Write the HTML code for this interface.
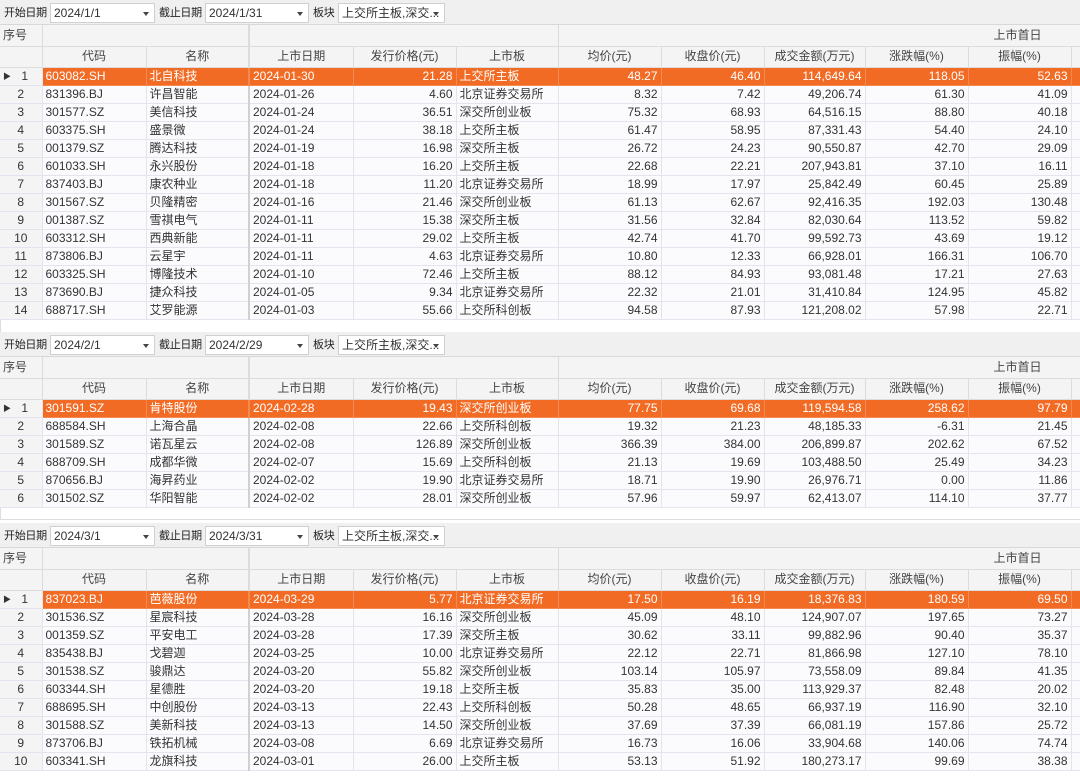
<!DOCTYPE html>
<html><head><meta charset="utf-8"><style>
*{margin:0;padding:0;box-sizing:border-box}
body{width:1080px;height:779px;background:#fff;position:relative;overflow:hidden;font-family:"Liberation Sans","Noto Sans CJK SC",sans-serif;font-size:12px;color:#333}
.sec{position:absolute;left:0;width:1080px}
.tb{height:25px;background:#f0f0f0;position:relative;border-bottom:1px solid #d8d8d8}
.tb span{position:absolute;top:3px;height:20px;line-height:20px;font-size:11px;color:#222;letter-spacing:-0.3px}
.cb{position:absolute;top:3px;height:20px;line-height:18px;background:#fff;border:1px solid #d0d0d0;padding:0 3px;font-size:12px}
.cb:after{content:"";position:absolute;right:5px;top:8px;border-left:3px solid transparent;border-right:3px solid transparent;border-top:4px solid #444}
table{border-collapse:collapse;table-layout:fixed;width:1080px}
td{height:18px;border-right:1px solid #e2e5ee;border-bottom:1px solid #e2e5ee;padding:0 3px;white-space:nowrap;overflow:hidden;background:#fbfbfe;line-height:17px}
tr.h td{height:21px;background:#f4f4f4;border-color:#dcdcdc;text-align:center;color:#444}
td.r{text-align:right}
td.c{text-align:center;background:#f4f4f4}
td.sep{border-right:2px solid #d0d0d0}
tr.s td{background:#f26b25;color:#fff;border-color:#f58a50}
tr.s td.c{background:#f4f4f4;color:#333;border-color:#e2e5ee}
.fill{background:#fff;border-bottom:1px solid #ddd;border-left:1px solid #ddd}
</style></head><body>

<div class="sec" style="top:0">
<div class="tb"><span style="left:4px">开始日期</span><div class="cb" style="left:50px;width:105px">2024/1/1</div><span style="left:159px">截止日期</span><div class="cb" style="left:205px;width:104px">2024/1/31</div><span style="left:313px">板块</span><div class="cb" style="left:338px;width:107px">上交所主板,深交...</div></div>
<table>
<colgroup><col style="width:42px"><col style="width:104px"><col style="width:103px"><col style="width:104px"><col style="width:103px"><col style="width:102px"><col style="width:103px"><col style="width:103px"><col style="width:101px"><col style="width:103px"><col style="width:103px"><col style="width:9px"></colgroup>
<tr class="h"><td style="text-align:left">序号</td><td colspan="2" class="sep"></td><td colspan="3"></td><td colspan="6" style="text-align:right;padding-right:38px">上市首日</td></tr>
<tr class="h"><td></td><td>代码</td><td class="sep">名称</td><td>上市日期</td><td>发行价格(元)</td><td>上市板</td><td>均价(元)</td><td>收盘价(元)</td><td>成交金额(万元)</td><td>涨跌幅(%)</td><td>振幅(%)</td><td></td></tr>
<tr class="s"><td class="c"><span style="font-size:8px;float:left">▶</span>1</td><td>603082.SH</td><td class="sep">北自科技</td><td>2024-01-30</td><td class="r">21.28</td><td>上交所主板</td><td class="r">48.27</td><td class="r">46.40</td><td class="r">114,649.64</td><td class="r">118.05</td><td class="r">52.63</td><td></td></tr>
<tr><td class="c">2</td><td>831396.BJ</td><td class="sep">许昌智能</td><td>2024-01-26</td><td class="r">4.60</td><td>北京证券交易所</td><td class="r">8.32</td><td class="r">7.42</td><td class="r">49,206.74</td><td class="r">61.30</td><td class="r">41.09</td><td></td></tr>
<tr><td class="c">3</td><td>301577.SZ</td><td class="sep">美信科技</td><td>2024-01-24</td><td class="r">36.51</td><td>深交所创业板</td><td class="r">75.32</td><td class="r">68.93</td><td class="r">64,516.15</td><td class="r">88.80</td><td class="r">40.18</td><td></td></tr>
<tr><td class="c">4</td><td>603375.SH</td><td class="sep">盛景微</td><td>2024-01-24</td><td class="r">38.18</td><td>上交所主板</td><td class="r">61.47</td><td class="r">58.95</td><td class="r">87,331.43</td><td class="r">54.40</td><td class="r">24.10</td><td></td></tr>
<tr><td class="c">5</td><td>001379.SZ</td><td class="sep">腾达科技</td><td>2024-01-19</td><td class="r">16.98</td><td>深交所主板</td><td class="r">26.72</td><td class="r">24.23</td><td class="r">90,550.87</td><td class="r">42.70</td><td class="r">29.09</td><td></td></tr>
<tr><td class="c">6</td><td>601033.SH</td><td class="sep">永兴股份</td><td>2024-01-18</td><td class="r">16.20</td><td>上交所主板</td><td class="r">22.68</td><td class="r">22.21</td><td class="r">207,943.81</td><td class="r">37.10</td><td class="r">16.11</td><td></td></tr>
<tr><td class="c">7</td><td>837403.BJ</td><td class="sep">康农种业</td><td>2024-01-18</td><td class="r">11.20</td><td>北京证券交易所</td><td class="r">18.99</td><td class="r">17.97</td><td class="r">25,842.49</td><td class="r">60.45</td><td class="r">25.89</td><td></td></tr>
<tr><td class="c">8</td><td>301567.SZ</td><td class="sep">贝隆精密</td><td>2024-01-16</td><td class="r">21.46</td><td>深交所创业板</td><td class="r">61.13</td><td class="r">62.67</td><td class="r">92,416.35</td><td class="r">192.03</td><td class="r">130.48</td><td></td></tr>
<tr><td class="c">9</td><td>001387.SZ</td><td class="sep">雪祺电气</td><td>2024-01-11</td><td class="r">15.38</td><td>深交所主板</td><td class="r">31.56</td><td class="r">32.84</td><td class="r">82,030.64</td><td class="r">113.52</td><td class="r">59.82</td><td></td></tr>
<tr><td class="c">10</td><td>603312.SH</td><td class="sep">西典新能</td><td>2024-01-11</td><td class="r">29.02</td><td>上交所主板</td><td class="r">42.74</td><td class="r">41.70</td><td class="r">99,592.73</td><td class="r">43.69</td><td class="r">19.12</td><td></td></tr>
<tr><td class="c">11</td><td>873806.BJ</td><td class="sep">云星宇</td><td>2024-01-11</td><td class="r">4.63</td><td>北京证券交易所</td><td class="r">10.80</td><td class="r">12.33</td><td class="r">66,928.01</td><td class="r">166.31</td><td class="r">106.70</td><td></td></tr>
<tr><td class="c">12</td><td>603325.SH</td><td class="sep">博隆技术</td><td>2024-01-10</td><td class="r">72.46</td><td>上交所主板</td><td class="r">88.12</td><td class="r">84.93</td><td class="r">93,081.48</td><td class="r">17.21</td><td class="r">27.63</td><td></td></tr>
<tr><td class="c">13</td><td>873690.BJ</td><td class="sep">捷众科技</td><td>2024-01-05</td><td class="r">9.34</td><td>北京证券交易所</td><td class="r">22.32</td><td class="r">21.01</td><td class="r">31,410.84</td><td class="r">124.95</td><td class="r">45.82</td><td></td></tr>
<tr><td class="c">14</td><td>688717.SH</td><td class="sep">艾罗能源</td><td>2024-01-03</td><td class="r">55.66</td><td>上交所科创板</td><td class="r">94.58</td><td class="r">87.93</td><td class="r">121,208.02</td><td class="r">57.98</td><td class="r">22.71</td><td></td></tr>
</table>
<div class="fill" style="height:13px"></div>
</div>

<div class="sec" style="top:332px">
<div class="tb"><span style="left:4px">开始日期</span><div class="cb" style="left:50px;width:105px">2024/2/1</div><span style="left:159px">截止日期</span><div class="cb" style="left:205px;width:104px">2024/2/29</div><span style="left:313px">板块</span><div class="cb" style="left:338px;width:107px">上交所主板,深交...</div></div>
<table>
<colgroup><col style="width:42px"><col style="width:104px"><col style="width:103px"><col style="width:104px"><col style="width:103px"><col style="width:102px"><col style="width:103px"><col style="width:103px"><col style="width:101px"><col style="width:103px"><col style="width:103px"><col style="width:9px"></colgroup>
<tr class="h"><td style="text-align:left">序号</td><td colspan="2" class="sep"></td><td colspan="3"></td><td colspan="6" style="text-align:right;padding-right:38px">上市首日</td></tr>
<tr class="h"><td></td><td>代码</td><td class="sep">名称</td><td>上市日期</td><td>发行价格(元)</td><td>上市板</td><td>均价(元)</td><td>收盘价(元)</td><td>成交金额(万元)</td><td>涨跌幅(%)</td><td>振幅(%)</td><td></td></tr>
<tr class="s"><td class="c"><span style="font-size:8px;float:left">▶</span>1</td><td>301591.SZ</td><td class="sep">肯特股份</td><td>2024-02-28</td><td class="r">19.43</td><td>深交所创业板</td><td class="r">77.75</td><td class="r">69.68</td><td class="r">119,594.58</td><td class="r">258.62</td><td class="r">97.79</td><td></td></tr>
<tr><td class="c">2</td><td>688584.SH</td><td class="sep">上海合晶</td><td>2024-02-08</td><td class="r">22.66</td><td>上交所科创板</td><td class="r">19.32</td><td class="r">21.23</td><td class="r">48,185.33</td><td class="r">-6.31</td><td class="r">21.45</td><td></td></tr>
<tr><td class="c">3</td><td>301589.SZ</td><td class="sep">诺瓦星云</td><td>2024-02-08</td><td class="r">126.89</td><td>深交所创业板</td><td class="r">366.39</td><td class="r">384.00</td><td class="r">206,899.87</td><td class="r">202.62</td><td class="r">67.52</td><td></td></tr>
<tr><td class="c">4</td><td>688709.SH</td><td class="sep">成都华微</td><td>2024-02-07</td><td class="r">15.69</td><td>上交所科创板</td><td class="r">21.13</td><td class="r">19.69</td><td class="r">103,488.50</td><td class="r">25.49</td><td class="r">34.23</td><td></td></tr>
<tr><td class="c">5</td><td>870656.BJ</td><td class="sep">海昇药业</td><td>2024-02-02</td><td class="r">19.90</td><td>北京证券交易所</td><td class="r">18.71</td><td class="r">19.90</td><td class="r">26,976.71</td><td class="r">0.00</td><td class="r">11.86</td><td></td></tr>
<tr><td class="c">6</td><td>301502.SZ</td><td class="sep">华阳智能</td><td>2024-02-02</td><td class="r">28.01</td><td>深交所创业板</td><td class="r">57.96</td><td class="r">59.97</td><td class="r">62,413.07</td><td class="r">114.10</td><td class="r">37.77</td><td></td></tr>
</table>
<div class="fill" style="height:12px"></div>
</div>

<div class="sec" style="top:523px">
<div class="tb"><span style="left:4px">开始日期</span><div class="cb" style="left:50px;width:105px">2024/3/1</div><span style="left:159px">截止日期</span><div class="cb" style="left:205px;width:104px">2024/3/31</div><span style="left:313px">板块</span><div class="cb" style="left:338px;width:107px">上交所主板,深交...</div></div>
<table>
<colgroup><col style="width:42px"><col style="width:104px"><col style="width:103px"><col style="width:104px"><col style="width:103px"><col style="width:102px"><col style="width:103px"><col style="width:103px"><col style="width:101px"><col style="width:103px"><col style="width:103px"><col style="width:9px"></colgroup>
<tr class="h"><td style="text-align:left">序号</td><td colspan="2" class="sep"></td><td colspan="3"></td><td colspan="6" style="text-align:right;padding-right:38px">上市首日</td></tr>
<tr class="h"><td></td><td>代码</td><td class="sep">名称</td><td>上市日期</td><td>发行价格(元)</td><td>上市板</td><td>均价(元)</td><td>收盘价(元)</td><td>成交金额(万元)</td><td>涨跌幅(%)</td><td>振幅(%)</td><td></td></tr>
<tr class="s"><td class="c"><span style="font-size:8px;float:left">▶</span>1</td><td>837023.BJ</td><td class="sep">芭薇股份</td><td>2024-03-29</td><td class="r">5.77</td><td>北京证券交易所</td><td class="r">17.50</td><td class="r">16.19</td><td class="r">18,376.83</td><td class="r">180.59</td><td class="r">69.50</td><td></td></tr>
<tr><td class="c">2</td><td>301536.SZ</td><td class="sep">星宸科技</td><td>2024-03-28</td><td class="r">16.16</td><td>深交所创业板</td><td class="r">45.09</td><td class="r">48.10</td><td class="r">124,907.07</td><td class="r">197.65</td><td class="r">73.27</td><td></td></tr>
<tr><td class="c">3</td><td>001359.SZ</td><td class="sep">平安电工</td><td>2024-03-28</td><td class="r">17.39</td><td>深交所主板</td><td class="r">30.62</td><td class="r">33.11</td><td class="r">99,882.96</td><td class="r">90.40</td><td class="r">35.37</td><td></td></tr>
<tr><td class="c">4</td><td>835438.BJ</td><td class="sep">戈碧迦</td><td>2024-03-25</td><td class="r">10.00</td><td>北京证券交易所</td><td class="r">22.12</td><td class="r">22.71</td><td class="r">81,866.98</td><td class="r">127.10</td><td class="r">78.10</td><td></td></tr>
<tr><td class="c">5</td><td>301538.SZ</td><td class="sep">骏鼎达</td><td>2024-03-20</td><td class="r">55.82</td><td>深交所创业板</td><td class="r">103.14</td><td class="r">105.97</td><td class="r">73,558.09</td><td class="r">89.84</td><td class="r">41.35</td><td></td></tr>
<tr><td class="c">6</td><td>603344.SH</td><td class="sep">星德胜</td><td>2024-03-20</td><td class="r">19.18</td><td>上交所主板</td><td class="r">35.83</td><td class="r">35.00</td><td class="r">113,929.37</td><td class="r">82.48</td><td class="r">20.02</td><td></td></tr>
<tr><td class="c">7</td><td>688695.SH</td><td class="sep">中创股份</td><td>2024-03-13</td><td class="r">22.43</td><td>上交所科创板</td><td class="r">50.28</td><td class="r">48.65</td><td class="r">66,937.19</td><td class="r">116.90</td><td class="r">32.10</td><td></td></tr>
<tr><td class="c">8</td><td>301588.SZ</td><td class="sep">美新科技</td><td>2024-03-13</td><td class="r">14.50</td><td>深交所创业板</td><td class="r">37.69</td><td class="r">37.39</td><td class="r">66,081.19</td><td class="r">157.86</td><td class="r">25.72</td><td></td></tr>
<tr><td class="c">9</td><td>873706.BJ</td><td class="sep">铁拓机械</td><td>2024-03-08</td><td class="r">6.69</td><td>北京证券交易所</td><td class="r">16.73</td><td class="r">16.06</td><td class="r">33,904.68</td><td class="r">140.06</td><td class="r">74.74</td><td></td></tr>
<tr><td class="c">10</td><td>603341.SH</td><td class="sep">龙旗科技</td><td>2024-03-01</td><td class="r">26.00</td><td>上交所主板</td><td class="r">53.13</td><td class="r">51.92</td><td class="r">180,273.17</td><td class="r">99.69</td><td class="r">38.38</td><td></td></tr>
</table>
</div>
</body></html>
